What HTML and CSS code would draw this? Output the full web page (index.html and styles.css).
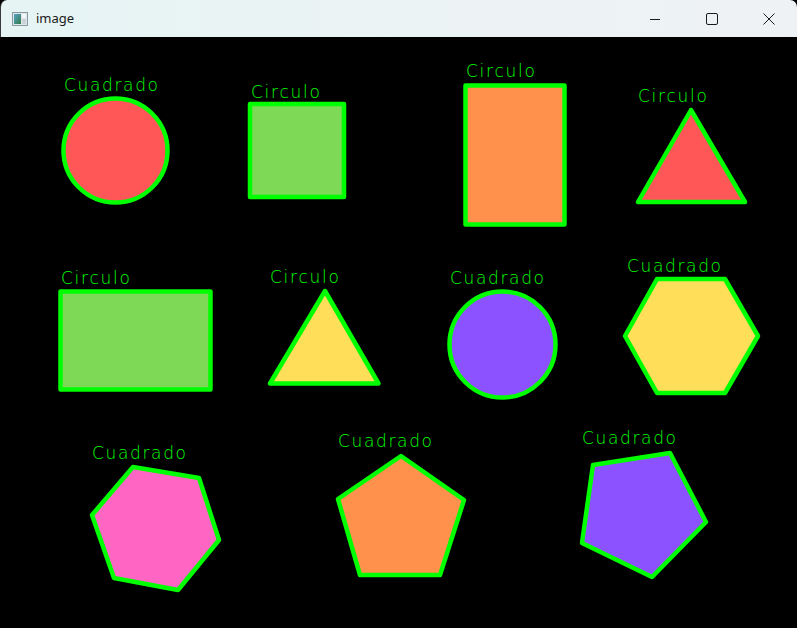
FILE: index.html
```html
<!DOCTYPE html>
<html lang="es">
<head>
<meta charset="utf-8">
<title>image</title>
<link rel="stylesheet" href="styles.css">
</head>
<body>
<div class="window">
  <header class="titlebar">
    <div class="title">
      <svg class="app-icon" width="16" height="14" viewBox="0 0 16 14">
        <defs>
          <linearGradient id="ig" x1="0" y1="0" x2="1" y2="1">
            <stop offset="0" stop-color="#5aa3c8"/>
            <stop offset="1" stop-color="#2f7a4a"/>
          </linearGradient>
        </defs>
        <rect x="0.5" y="0.5" width="15" height="13" fill="#dfe6ea" stroke="#8a9aa5"/>
        <rect x="2" y="2" width="7" height="10" fill="url(#ig)"/>
        <rect x="10" y="2" width="4" height="4" fill="#f4f7f8"/>
        <rect x="10" y="7" width="4" height="5" fill="#c9d3d8"/>
      </svg>
      <span class="title-text">image</span>
    </div>
    <div class="controls">
      <div class="ctl">
        <svg width="12" height="12" viewBox="0 0 12 12"><path d="M1 6.5h10" stroke="#1b1b1b" stroke-width="1"/></svg>
      </div>
      <div class="ctl">
        <svg width="12" height="12" viewBox="0 0 12 12"><rect x="0.5" y="0.5" width="11" height="11" rx="1.5" fill="none" stroke="#1b1b1b" stroke-width="1"/></svg>
      </div>
      <div class="ctl">
        <svg width="12" height="12" viewBox="0 0 12 12"><path d="M0.5 0.5L11.5 11.5M11.5 0.5L0.5 11.5" stroke="#1b1b1b" stroke-width="1"/></svg>
      </div>
    </div>
  </header>
  <main class="canvas-area">
    <svg class="canvas" width="797" height="591" viewBox="0 37 797 591">
      <rect x="0" y="37" width="797" height="591" fill="#000"/>

      <circle class="shape red" cx="115.5" cy="150.5" r="52"/>
      <text class="label" x="64" y="91" textLength="94" lengthAdjust="spacing">Cuadrado</text>

      <rect class="shape green" x="250" y="104" width="94" height="93"/>
      <text class="label" x="251" y="98" textLength="69" lengthAdjust="spacing">Circulo</text>

      <rect class="shape orange" x="465.5" y="85.5" width="99" height="139"/>
      <text class="label" x="466" y="77" textLength="69" lengthAdjust="spacing">Circulo</text>

      <polygon class="shape red" points="691,110 638,202 745,202"/>
      <text class="label" x="638" y="102" textLength="69" lengthAdjust="spacing">Circulo</text>

      <rect class="shape green" x="60.5" y="291.5" width="150" height="98"/>
      <text class="label" x="61" y="284" textLength="69" lengthAdjust="spacing">Circulo</text>

      <polygon class="shape yellow" points="325,291 270,383.5 378.5,383.5"/>
      <text class="label" x="270" y="283" textLength="69" lengthAdjust="spacing">Circulo</text>

      <circle class="shape purple" cx="502.5" cy="344.5" r="53"/>
      <text class="label" x="450" y="284" textLength="94" lengthAdjust="spacing">Cuadrado</text>

      <polygon class="shape yellow" points="657,279 725,279 758,336 725,393 657,393 625,336"/>
      <text class="label" x="627" y="272" textLength="94" lengthAdjust="spacing">Cuadrado</text>

      <polygon class="shape pink" points="133,467 199,478 219,540 178,590 114,578 92,515"/>
      <text class="label" x="92" y="459" textLength="94" lengthAdjust="spacing">Cuadrado</text>

      <polygon class="shape orange" points="401,456 464,500 440,575 360,575 338,499"/>
      <text class="label" x="338" y="447" textLength="94" lengthAdjust="spacing">Cuadrado</text>

      <polygon class="shape purple" points="593,465 670,453 706,522 652,577 582,543"/>
      <text class="label" x="582" y="444" textLength="94" lengthAdjust="spacing">Cuadrado</text>
    </svg>
  </main>
</div>
</body>
</html>
```

FILE: styles.css
```css
html, body {
  margin: 0;
  padding: 0;
  background: #000;
  width: 797px;
  height: 628px;
  overflow: hidden;
}

.window {
  display: flex;
  flex-direction: column;
  width: 797px;
  height: 628px;
}

.titlebar {
  height: 37px;
  flex: 0 0 37px;
  display: flex;
  align-items: center;
  justify-content: space-between;
  background: linear-gradient(90deg, #e6f4f4 0%, #ebf3f4 45%, #eff2f4 100%);
  border-top-left-radius: 7px;
  border-top-right-radius: 7px;
  box-sizing: border-box;
  border-left: 1px solid #3a3a3a;
}

.title {
  display: flex;
  align-items: center;
  gap: 8px;
  padding-left: 11px;
}

.app-icon {
  display: block;
}

.title-text {
  font-family: "Noto Sans", "Open Sans", "DejaVu Sans", sans-serif;
  font-size: 13px;
  color: #1a1a1a;
  position: relative;
  top: -1px;
}

.controls {
  display: flex;
  height: 100%;
}

.ctl {
  width: 57px;
  height: 100%;
  display: flex;
  align-items: center;
  justify-content: center;
}

.ctl svg {
  display: block;
}

.canvas-area {
  flex: 1;
  background: #000;
}

.canvas {
  display: block;
}

.shape {
  stroke: #00ff00;
  stroke-width: 4.5;
  stroke-linejoin: round;
}

.red { fill: #ff5757; }
.green { fill: #7ed957; }
.orange { fill: #ff914d; }
.yellow { fill: #ffde59; }
.purple { fill: #8c52ff; }
.pink { fill: #ff66c4; }

.label {
  fill: #00ff00;
  font-family: "DejaVu Sans", sans-serif;
  font-weight: 200;
  font-size: 17px;
}
```
